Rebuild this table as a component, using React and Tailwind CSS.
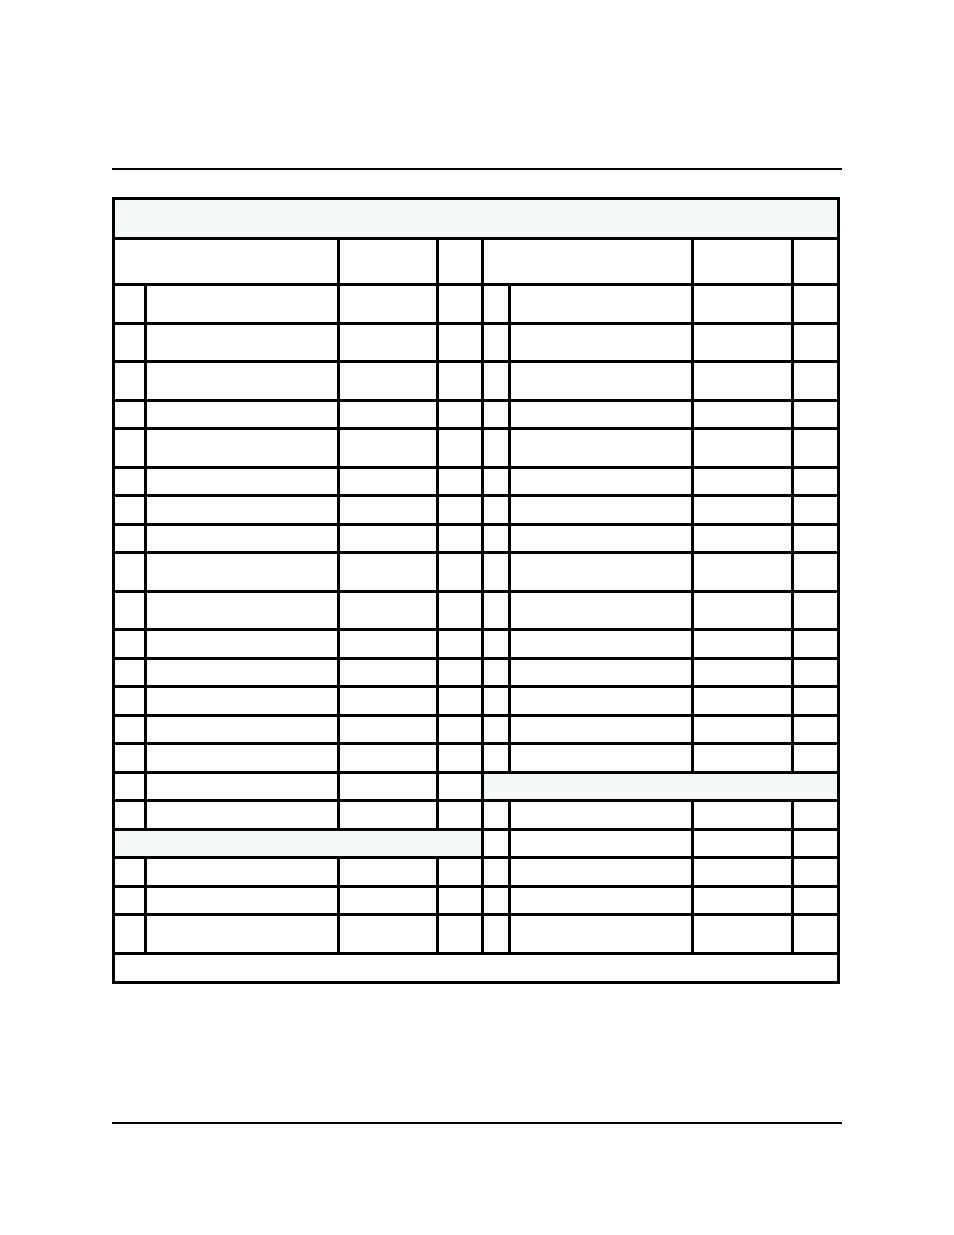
import React from 'react';

const T = 'tall';
const S = 'short';
// body row heights, top to bottom
const bodyRows = [T, T, T, S, T, S, S, S, T, T, S, S, S, S, S, S, S, S, S, S, T];

const LEFT_BAND = 17;
const RIGHT_BAND = 15;

const Cell = ({ className = '' }) => <div className={`bg-white ${className}`}></div>;
const Band = () => <div className="col-span-4 bg-[#f5f9fa]"></div>;

const Side = ({ band }) =>
  band ? (
    <Band />
  ) : (
    <>
      <Cell />
      <Cell />
      <Cell />
      <Cell />
    </>
  );

export default function App() {
  return (
    <div className="w-[954px] h-[1235px] bg-white pt-[168px] font-['Liberation_Sans',sans-serif]">
      <div className="ml-[112px] w-[730px]">
        <div className="h-[2px] w-[730px] bg-black"></div>

        <div
          className="mt-[27px] w-[728px] bg-black p-[3px] grid gap-[3px] grid-cols-[29px_189.5px_96.5px_42px_24px_179.5px_97.5px_43px] grid-rows-[37px_43px_35.5px_35.5px_35.5px_25.5px_35.5px_25.5px_25.5px_25.5px_35.5px_35.5px_25.5px_25.5px_25.5px_25.5px_25.5px_25.5px_25.5px_25.5px_25.5px_25.5px_35.5px_26.5px]"
        >
          {/* title band */}
          <div className="col-span-8 bg-[#f5f9fa]"></div>

          {/* column headings */}
          <Cell className="col-span-2" />
          <Cell />
          <Cell />
          <Cell className="col-span-2" />
          <Cell />
          <Cell />

          {bodyRows.map((_, i) => (
            <React.Fragment key={i}>
              <Side band={i === LEFT_BAND} />
              <Side band={i === RIGHT_BAND} />
            </React.Fragment>
          ))}

          {/* footer note row */}
          <Cell className="col-span-8" />
        </div>

        <div className="mt-[138px] h-[2px] w-[730px] bg-black"></div>
      </div>
    </div>
  );
}
